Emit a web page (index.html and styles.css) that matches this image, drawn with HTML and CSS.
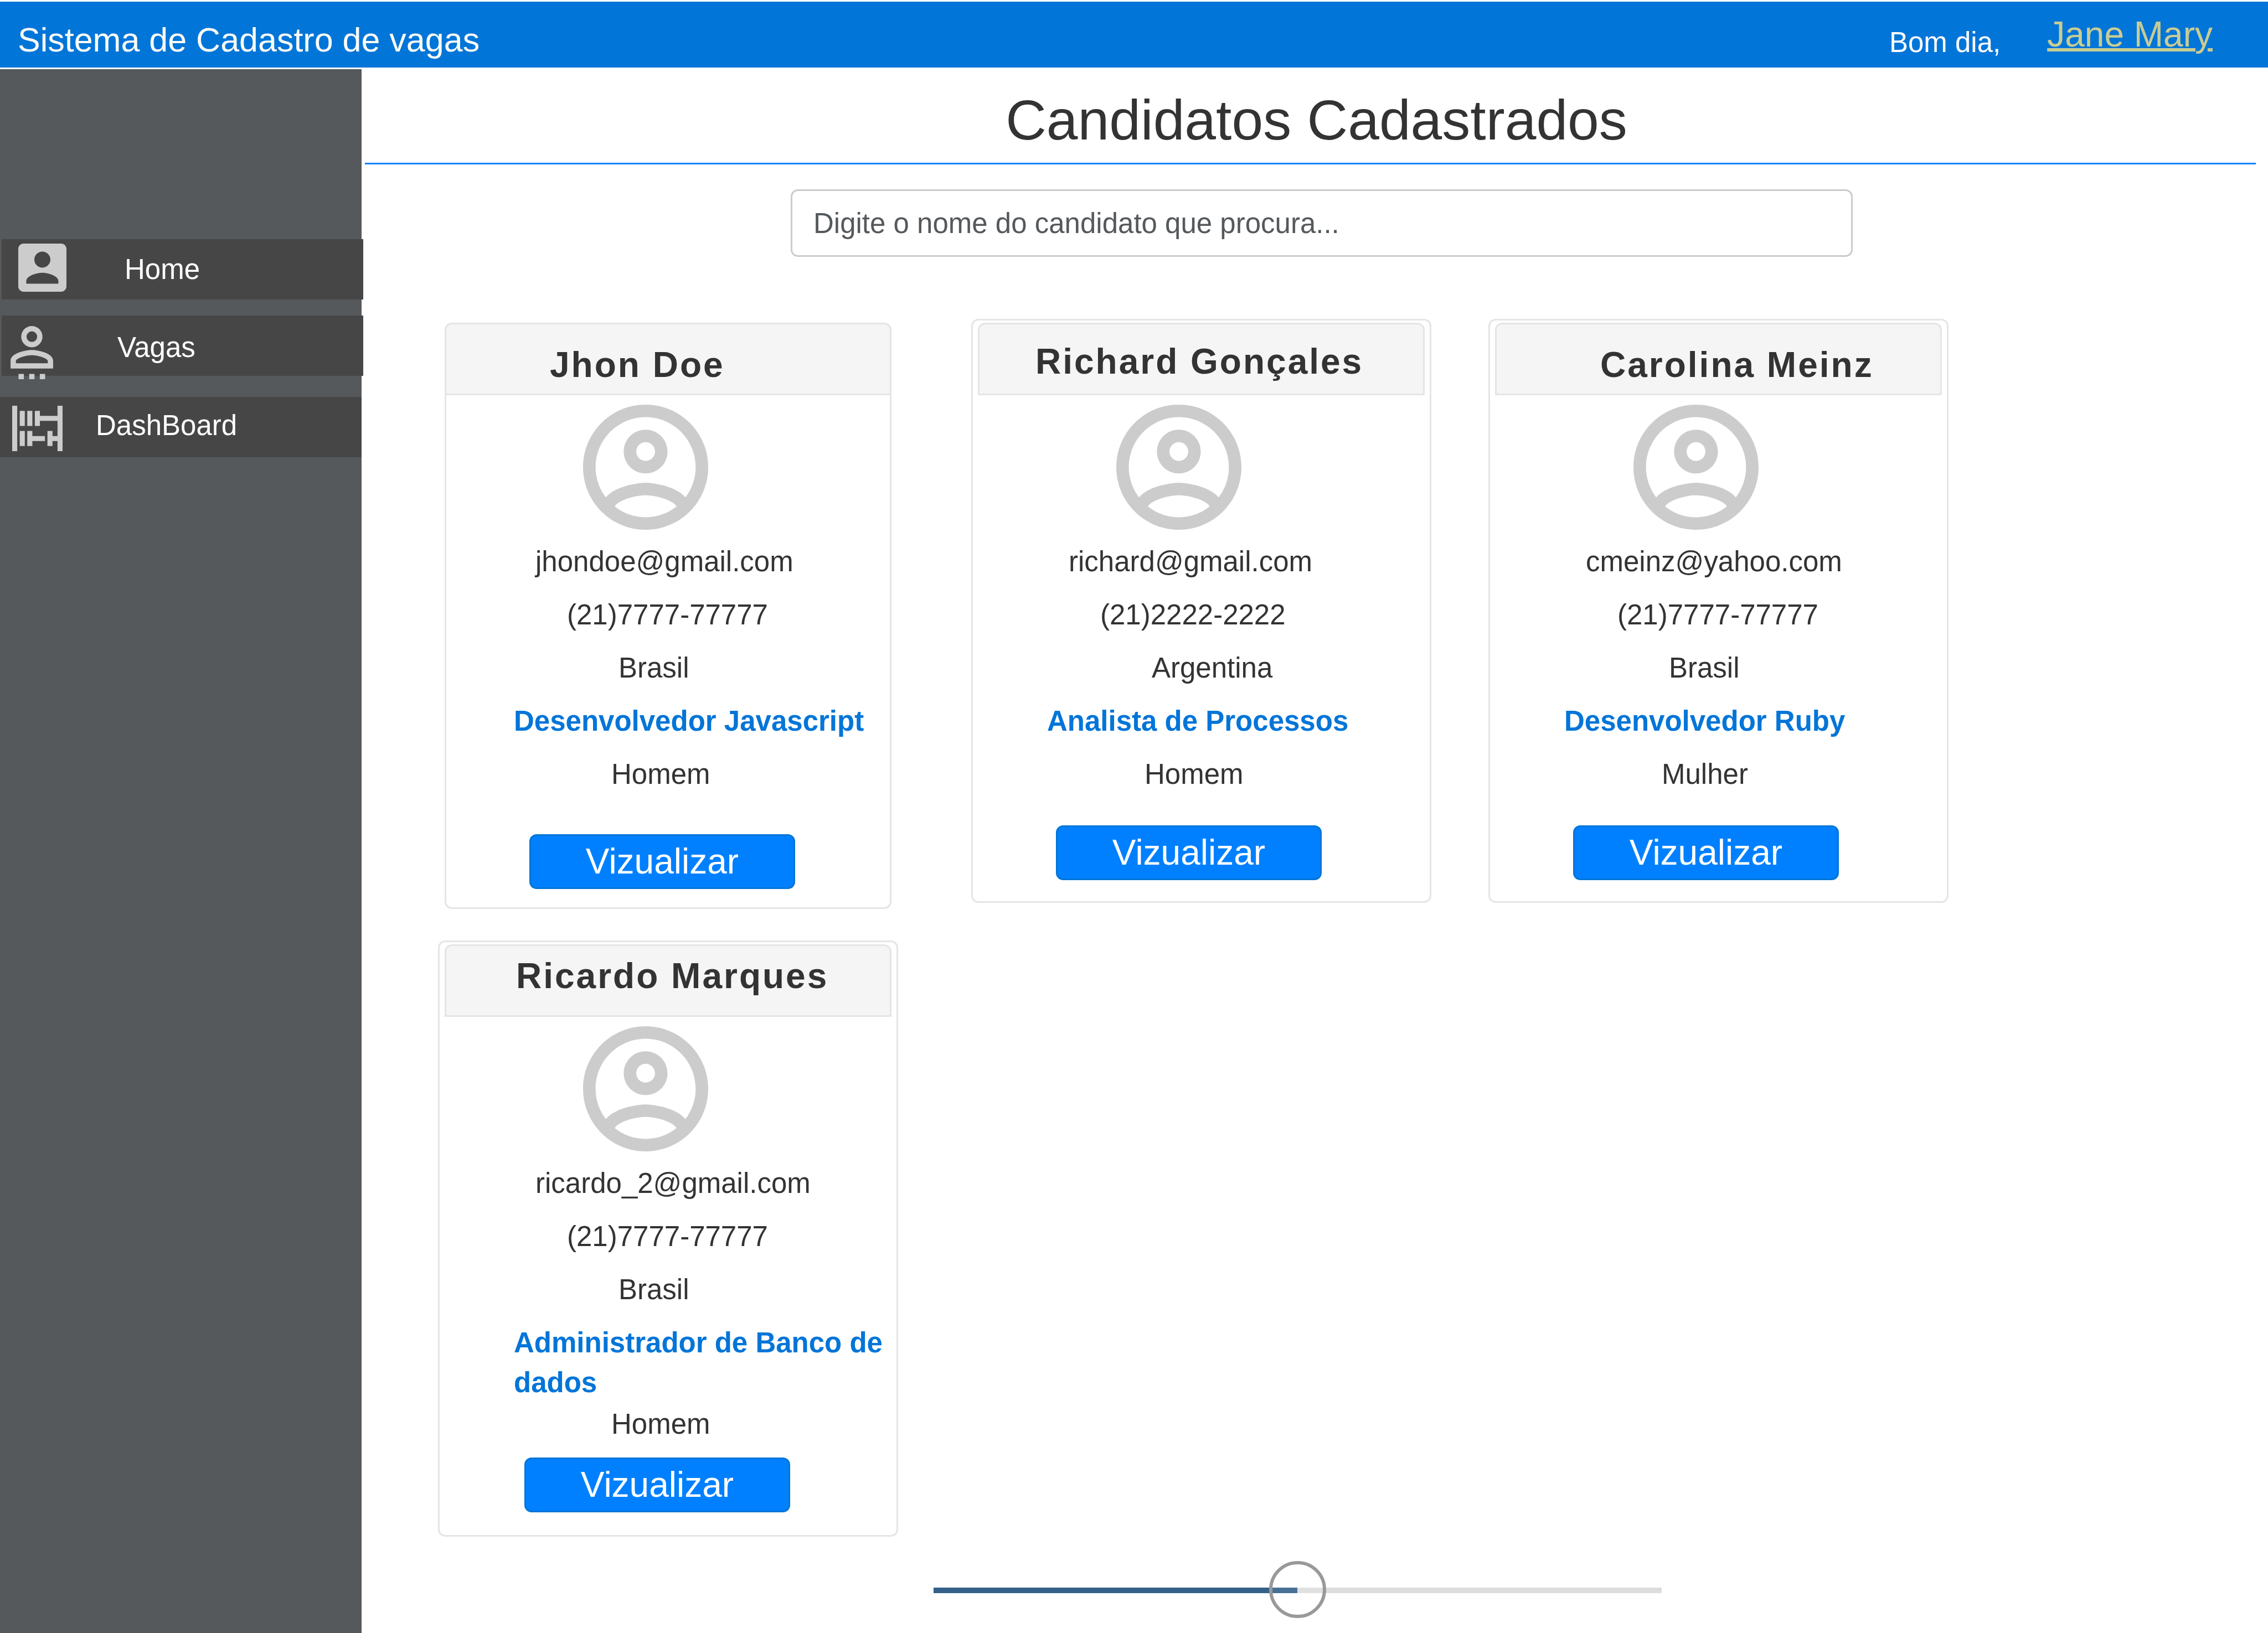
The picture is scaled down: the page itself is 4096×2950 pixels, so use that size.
FILE: index.html
```html
<!DOCTYPE html>
<html lang="pt-BR">
<head>
<meta charset="utf-8">
<meta name="viewport" content="width=device-width, initial-scale=1">
<title>Candidatos Cadastrados</title>
<link rel="stylesheet" href="styles.css">
</head>
<body>
<svg class="sprite" aria-hidden="true">
  <symbol id="avatar" viewBox="2 2 20 20">
    <path d="M12 2C6.48 2 2 6.48 2 12s4.48 10 10 10 10-4.48 10-10S17.52 2 12 2zM7.07 18.28c.43-.9 3.05-1.78 4.93-1.78s4.51.88 4.93 1.78C15.57 19.36 13.86 20 12 20s-3.57-.64-4.93-1.72zm11.29-1.45c-1.43-1.74-4.9-2.33-6.36-2.33s-4.93.59-6.36 2.33C4.62 15.49 4 13.82 4 12c0-4.41 3.59-8 8-8s8 3.59 8 8c0 1.82-.62 3.49-1.64 4.83zM12 6c-1.94 0-3.5 1.56-3.5 3.5S10.06 13 12 13s3.5-1.56 3.5-3.5S13.94 6 12 6zm0 5c-.83 0-1.5-.67-1.5-1.5S11.17 8 12 8s1.5.67 1.5 1.5S12.83 11 12 11z"/>
  </symbol>
</svg>

<header class="topbar">
  <span class="brand">Sistema de Cadastro de vagas</span>
  <span class="greeting">Bom dia,</span>
  <a class="user" href="#">Jane Mary</a>
</header>

<div class="layout">
  <nav class="sidebar">
    <a class="nav-item nav-home" href="#">
      <svg class="nav-icon" viewBox="3 3 18 18" aria-hidden="true"><path d="M3 5v14c0 1.1.89 2 2 2h14c1.1 0 2-.9 2-2V5c0-1.1-.9-2-2-2H5c-1.11 0-2 .9-2 2zm12 4c0 1.66-1.34 3-3 3s-3-1.34-3-3 1.34-3 3-3 3 1.34 3 3zm-9 8c0-2 4-3.1 6-3.1s6 1.1 6 3.1v1H6v-1z"/></svg>
      <span class="nav-label">Home</span>
    </a>
    <a class="nav-item nav-jobs" href="#">
      <svg class="nav-icon" viewBox="4 4 16 20" aria-hidden="true"><path fill-rule="evenodd" d="M12 4a4 4 0 1 0 0 8 4 4 0 0 0 0-8zm0 2a2 2 0 1 1 0 4 2 2 0 0 1 0-4zM12 13c-2.67 0-8 1.34-8 4v3h16v-3c0-2.66-5.33-4-8-4zM6 18v-.99C6.2 16.29 9.3 15 12 15s5.8 1.29 6 2v1H6zM7 22h2v2H7zM11 22h2v2h-2zM15 22h2v2h-2z"/></svg>
      <span class="nav-label">Vagas</span>
    </a>
    <a class="nav-item nav-dashboard" href="#">
      <svg class="nav-icon" viewBox="2 3 20 18" aria-hidden="true"><path d="M2 3h2v18H2zM20 3h2v18h-2v-4h-2v2h-2v-6h2v2h2V9h-7v2h-2V5h2v2h7zM5 5h2v6H5zM8 5h2v6H8zM5 13h2v6H5zM8 13h2v2h5v2h-5v2H8z"/></svg>
      <span class="nav-label">DashBoard</span>
    </a>
  </nav>

  <main class="content">
    <h1 class="title">Candidatos Cadastrados</h1>
    <hr class="rule">
    <form class="search">
      <input class="search-input" type="text" aria-label="Nome do candidato" placeholder="Digite o nome do candidato que procura...">
    </form>

    <section class="cards">
      <article class="card card-flush">
        <h2 class="card-name">Jhon Doe</h2>
        <svg class="avatar" aria-hidden="true"><use href="#avatar"/></svg>
        <p class="email">jhondoe@gmail.com</p>
        <p class="phone">(21)7777-77777</p>
        <p class="country">Brasil</p>
        <p class="role">Desenvolvedor Javascript</p>
        <p class="gender">Homem</p>
        <button class="view" type="button">Vizualizar</button>
      </article>

      <article class="card card-wide-name">
        <h2 class="card-name">Richard Gonçales</h2>
        <svg class="avatar" aria-hidden="true"><use href="#avatar"/></svg>
        <p class="email">richard@gmail.com</p>
        <p class="phone">(21)2222-2222</p>
        <p class="country">Argentina</p>
        <p class="role">Analista de Processos</p>
        <p class="gender">Homem</p>
        <button class="view" type="button">Vizualizar</button>
      </article>

      <article class="card">
        <h2 class="card-name">Carolina Meinz</h2>
        <svg class="avatar" aria-hidden="true"><use href="#avatar"/></svg>
        <p class="email">cmeinz@yahoo.com</p>
        <p class="phone">(21)7777-77777</p>
        <p class="country">Brasil</p>
        <p class="role">Desenvolvedor Ruby</p>
        <p class="gender">Mulher</p>
        <button class="view" type="button">Vizualizar</button>
      </article>

      <article class="card card-long-role">
        <h2 class="card-name">Ricardo Marques</h2>
        <svg class="avatar" aria-hidden="true"><use href="#avatar"/></svg>
        <p class="email">ricardo_2@gmail.com</p>
        <p class="phone">(21)7777-77777</p>
        <p class="country">Brasil</p>
        <p class="role">Administrador de Banco de dados</p>
        <p class="gender">Homem</p>
        <button class="view" type="button">Vizualizar</button>
      </article>
    </section>

    <div class="pager">
      <input class="slider" type="range" min="0" max="100" value="50" aria-label="Página de candidatos">
    </div>
  </main>
</div>
</body>
</html>
```
FILE: styles.css
```css
* {
  box-sizing: border-box;
}

body {
  margin: 0;
  min-height: 100vh;
  display: flex;
  flex-direction: column;
  background: #fff;
  color: #333;
  font-family: "Liberation Sans", Arial, sans-serif;
  font-size: 51px;
}

h1, h2, p {
  margin: 0;
}

.sprite {
  position: absolute;
  width: 0;
  height: 0;
}

/* Top bar */

.topbar {
  display: flex;
  align-items: flex-start;
  height: 119px;
  margin: 3px 0;
  padding: 0 100px 0 32px;
  background: #0275d8;
}

.brand {
  margin-right: auto;
  padding-top: 35px;
  color: #fcfcf7;
  font-size: 61px;
  line-height: 68px;
}

.greeting {
  margin-right: 84px;
  padding-top: 45px;
  color: #fcfcfc;
  line-height: 57px;
}

.user {
  margin-top: 23px;
  color: #c9cc93;
  font-size: 64px;
  line-height: 72px;
  text-decoration-thickness: 6px;
  text-underline-offset: 3px;
}

/* Side navigation */

.layout {
  display: flex;
  flex: 1;
}

.sidebar {
  flex: none;
  width: 653px;
  padding-top: 307px;
  background: #55595c;
}

.nav-item {
  display: flex;
  align-items: flex-start;
  width: 653px;
  height: 109px;
  background: #464646;
  color: #fff;
  text-decoration: none;
}

.nav-icon {
  flex: none;
  fill: #ccc;
}

.nav-label {
  line-height: 57px;
}

.nav-home {
  margin: 0 0 29px 3px;
  padding: 8px 0 0 30px;
  gap: 105px;
}

.nav-home .nav-icon {
  width: 87px;
  height: 87px;
}

.nav-home .nav-label {
  padding-top: 18px;
}

.nav-jobs {
  margin: 0 0 38px 3px;
  padding: 19px 0 0 16px;
  gap: 116px;
}

.nav-jobs .nav-icon {
  width: 77px;
  height: 96px;
}

.nav-jobs .nav-label {
  padding-top: 10px;
}

.nav-dashboard {
  padding: 16px 0 0 22px;
  gap: 60px;
}

.nav-dashboard .nav-icon {
  width: 91px;
  height: 82px;
}

.nav-dashboard .nav-label {
  padding-top: 7px;
}

/* Main column */

.content {
  flex: 1;
  min-width: 0;
  padding-left: 6px;
}

.title {
  padding: 32px 0 17px;
  font-size: 102px;
  font-weight: normal;
  line-height: 120px;
  text-align: center;
}

.rule {
  height: 3px;
  margin: 0 22px 45px 0;
  border: 0;
  background: #0080ff;
}

.search {
  padding-left: 769px;
}

.search-input {
  display: block;
  width: 1918px;
  max-width: 100%;
  height: 122px;
  padding: 0 38px;
  border: 3px solid #ccc;
  border-radius: 13px;
  background: #fff;
  color: #55595c;
  font: inherit;
}

.search-input::placeholder {
  color: #55595c;
  opacity: 1;
}

/* Candidate cards */

.cards {
  display: grid;
  grid-template-columns: 963fr 934fr 1408fr;
  row-gap: 57px;
  align-items: start;
  padding: 112px 0 0 132px;
}

.card {
  width: 831px;
  padding: 4px 9px 38px;
  border: 3px solid #e5e5e5;
  border-radius: 13px;
}

.card-name {
  height: 131px;
  padding: 37px 0 0 187px;
  border: 3px solid #e5e5e5;
  border-radius: 13px 13px 0 0;
  background: #f5f5f5;
  font-size: 64px;
  line-height: 72px;
  letter-spacing: 3px;
  white-space: nowrap;
}

.avatar {
  display: block;
  width: 226px;
  height: 226px;
  margin: 17px 0 10px 250px;
  fill: #ccc;
}

.email,
.phone,
.country,
.gender {
  line-height: 96px;
}

.email {
  padding-left: 164px;
}

.phone {
  padding-left: 221px;
}

.country {
  padding-left: 314px;
}

.gender {
  padding-left: 301px;
}

.role {
  padding: 12px 0 12px 125px;
  color: #0275d8;
  font-weight: bold;
  line-height: 72px;
}

.view {
  display: block;
  width: 480px;
  height: 99px;
  margin: 44px 0 0 141px;
  padding: 0 0 2px;
  border: 3px solid #0275d8;
  border-radius: 13px;
  background: #0080ff;
  color: #fff;
  font: inherit;
  font-size: 64px;
}

/* The card's frame and the name strip share one border */
.card-flush {
  width: 807px;
  margin: 7px 12px 0;
  padding: 0 0 36px;
  border: 0;
  box-shadow: inset 0 0 0 3px #e5e5e5;
}

.card-flush .view {
  margin: 60px 0 0 153px;
}

.card-wide-name .card-name {
  padding: 31px 0 0 101px;
}

.card-long-role {
  padding-bottom: 41px;
}

.card-long-role .card-name {
  padding: 18px 0 0 126px;
}

.card-long-role .role {
  margin-bottom: -21px;
}

.card-long-role .view {
  margin: 12px 0 0 144px;
}

/* Slider */

.pager {
  padding: 45px 0 0 1027px;
}

.slider {
  display: block;
  width: 1315px;
  max-width: 100%;
  height: 103px;
  margin: 0;
  appearance: none;
  background: none;
}

.slider::-webkit-slider-runnable-track {
  height: 10px;
  background: linear-gradient(to right, #336188 50%, #ddd 50%);
}

.slider::-webkit-slider-thumb {
  appearance: none;
  width: 103px;
  height: 103px;
  margin-top: -48px;
  border: 6px solid #999;
  border-radius: 50%;
  background: rgba(255, 255, 255, 0.1);
}
```
